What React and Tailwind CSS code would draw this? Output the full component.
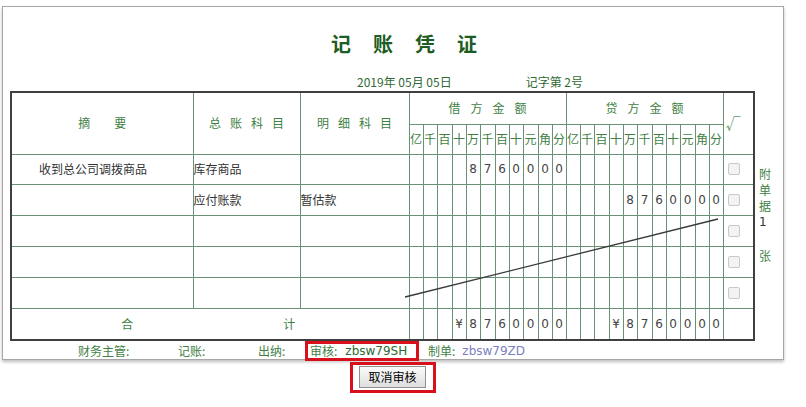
import React from 'react';

const DIGITS = ['亿', '千', '百', '十', '万', '千', '百', '十', '元', '角', '分'];
const DIGIT_W = [14, 14, 15, 14, 14, 15, 14, 14, 15, 14, 14];

const ROWS = [
  { summary: '收到总公司调拨商品', gen: '库存商品', det: '', debit: '8760000', credit: '' },
  { summary: '', gen: '应付账款', det: '暂估款', debit: '', credit: '8760000' },
  { summary: '', gen: '', det: '', debit: '', credit: '' },
  { summary: '', gen: '', det: '', debit: '', credit: '' },
  { summary: '', gen: '', det: '', debit: '', credit: '' },
];

// right-align an amount string into the 11 digit cells
const toCells = (s) => {
  const chars = s.split('');
  return Array.from({ length: 11 }, (_, i) => chars[i - (11 - chars.length)] || '');
};

const Spaced = ({ text, gap }) => (
  <div className="flex justify-center" style={{ gap }}>
    {text.split('').map((c, i) => (
      <span key={i}>{c}</span>
    ))}
  </div>
);

const Checkbox = () => (
  <div className="w-[12px] h-[12px] rounded-[2px] border border-[#c8c8c8] bg-[#f3f3f3] ml-[4px]" />
);

const AmountCells = ({ value, keyPrefix }) =>
  toCells(value).map((c, i) => (
    <td
      key={keyPrefix + i}
      className="border border-[#6a9176] text-center p-0 text-[12px] text-[#444] font-['DejaVu_Sans',sans-serif]"
    >
      {c}
    </td>
  ));

export default function App() {
  return (
    <div className="w-[806px] h-[407px] bg-white pt-[6px] pl-[2px] font-['Noto_Sans_CJK_SC',sans-serif] overflow-hidden">
      <div className="w-[782px] h-[354px] border border-[#a6a6a6] shadow-[0_2px_3px_rgba(0,0,0,0.25)] bg-white">
        {/* title */}
        <div className="mt-[25px] h-[24px] flex pl-[328px] gap-[22px] text-[20px] leading-[24px] font-bold text-[#1d5c22]">
          <span>记</span>
          <span>账</span>
          <span>凭</span>
          <span>证</span>
        </div>

        {/* date line */}
        <div className="mt-[18px] h-[16px] flex text-[12px] leading-[16px] text-[#2f6a33]">
          <span className="ml-[354px]">2019年 05月 05日</span>
          <span className="ml-[74px]">记字第 2号</span>
        </div>

        <div className="mt-[1px] flex">
          <div className="relative ml-[7px]">
            <table className="table-fixed w-[743px] border-collapse border-2 border-[#3f3f3f] text-[12px]">
              <colgroup>
                <col className="w-[182px]" />
                <col className="w-[107px]" />
                <col className="w-[109px]" />
                {DIGIT_W.map((w, i) => (
                  <col key={'d' + i} style={{ width: w }} />
                ))}
                {DIGIT_W.map((w, i) => (
                  <col key={'c' + i} style={{ width: w }} />
                ))}
                <col className="w-[31px]" />
              </colgroup>
              <thead>
                <tr className="h-[32px]">
                  <td rowSpan={2} className="border border-[#6a9176] text-[#3f7f45]">
                    <Spaced text="摘要" gap={24} />
                  </td>
                  <td rowSpan={2} className="border border-[#6a9176] text-[#3f7f45]">
                    <Spaced text="总账科目" gap={9} />
                  </td>
                  <td rowSpan={2} className="border border-[#6a9176] text-[#3f7f45]">
                    <Spaced text="明细科目" gap={9} />
                  </td>
                  <td colSpan={11} className="border border-[#6a9176] text-[#3f7f45]">
                    <Spaced text="借方金额" gap={10} />
                  </td>
                  <td colSpan={11} className="border border-[#6a9176] text-[#3f7f45]">
                    <Spaced text="贷方金额" gap={10} />
                  </td>
                  <td rowSpan={2} className="border border-[#6a9176] align-top pt-[22px] pl-[2px] text-[15px] leading-[16px] text-[#5f9a66]">
                    √
                  </td>
                </tr>
                <tr className="h-[30px]">
                  {[...DIGITS, ...DIGITS].map((d, i) => (
                    <td key={i} className="border border-[#6a9176] text-center p-0 text-[12px] text-[#3f7f45] leading-none">
                      {d}
                    </td>
                  ))}
                </tr>
              </thead>
              <tbody>
                {ROWS.map((r, i) => (
                  <tr key={i} className={i === 0 ? 'h-[30px]' : 'h-[31px]'}>
                    <td className="border border-[#6a9176] pl-[27px] text-[#333] whitespace-nowrap">{r.summary}</td>
                    <td className="border border-[#6a9176] pl-0 text-[#333] whitespace-nowrap">{r.gen}</td>
                    <td className="border border-[#6a9176] pl-0 text-[#333] whitespace-nowrap">{r.det}</td>
                    <AmountCells value={r.debit} keyPrefix="d" />
                    <AmountCells value={r.credit} keyPrefix="c" />
                    <td className="border border-[#6a9176]">
                      <Checkbox />
                    </td>
                  </tr>
                ))}
                <tr className="h-[32px]">
                  <td colSpan={3} className="border border-[#6a9176] text-[#3f7f45]">
                    <div className="flex justify-center gap-[150px] pr-[4px]">
                      <span>合</span>
                      <span>计</span>
                    </div>
                  </td>
                  <AmountCells value="¥8760000" keyPrefix="td" />
                  <AmountCells value="¥8760000" keyPrefix="tc" />
                  <td className="border border-[#6a9176]" />
                </tr>
              </tbody>
            </table>
            {/* strike-through line over the unused rows */}
            <svg className="absolute left-0 top-0 pointer-events-none" width="743" height="247">
              <line x1="395" y1="206" x2="708" y2="128" stroke="#3a3a3a" strokeWidth="1.3" />
            </svg>
          </div>

          {/* attachments */}
          <div className="pl-[4px] pt-[75px] flex flex-col text-[12px] leading-[16px] text-[#3f7f45]">
            <span>附</span>
            <span>单</span>
            <span>据</span>
            <span className="text-[#333] font-['DejaVu_Sans',sans-serif]">1</span>
            <span className="mt-[18px]">张</span>
          </div>
        </div>

        {/* signatures */}
        <div className="flex items-center h-[20px] text-[12px] text-[#3f7f45] whitespace-nowrap">
          <span className="ml-[75px] w-[100px]">财务主管:</span>
          <span className="w-[80px]">记账:</span>
          <span className="w-[47px]">出纳:</span>
          <span className="h-[20px] w-[114px] border-[3px] border-[#d7101c] flex items-center pl-[2px]">
            审核:
            <span className="ml-[8px] text-[#2c6a32] font-['DejaVu_Sans',sans-serif]">zbsw79SH</span>
          </span>
          <span className="ml-[9px]">制单:</span>
          <span className="ml-[7px] text-[#7d7fc0] font-['DejaVu_Sans',sans-serif]">zbsw79ZD</span>
        </div>
      </div>

      {/* action */}
      <div className="w-[782px] flex justify-center mt-[2px]">
        <div className="w-[86px] h-[31px] border-[3px] border-[#d7101c] flex items-start pt-[1px] pl-[6px]">
          <button className="w-[67px] h-[22px] border border-[#8f8f8f] bg-gradient-to-b from-[#fbfbfb] to-[#dedede] text-[12px] leading-none text-black">
            取消审核
          </button>
        </div>
      </div>
    </div>
  );
}
